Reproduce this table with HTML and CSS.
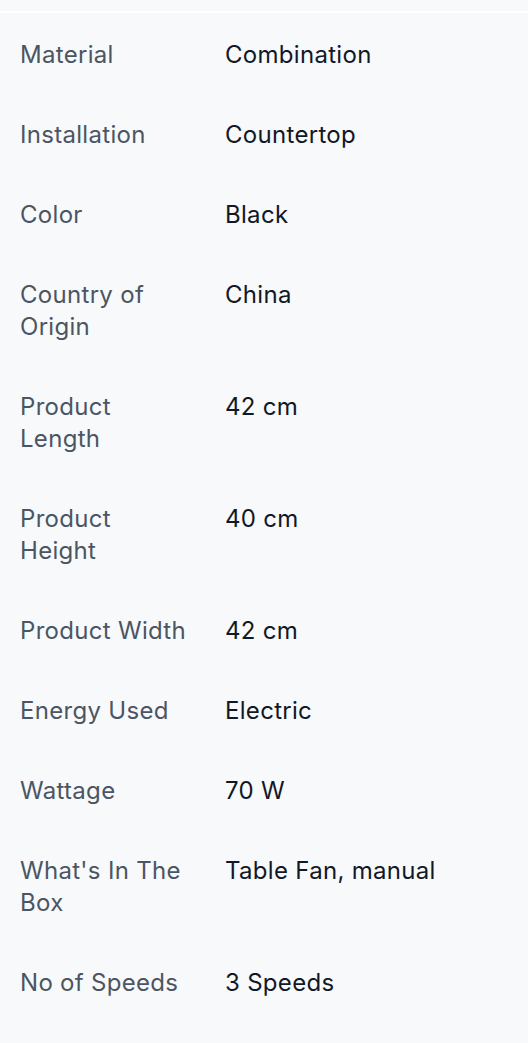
FILE: index.html
```html
<!DOCTYPE html>
<html lang="en">
<head>
    <meta charset="UTF-8">
    <meta name="viewport" content="width=device-width, initial-scale=1.0">
    <title>Specifications</title>
    <link rel="stylesheet" href="styles.css">
</head>
<body>
    <div class="top-strip"></div>
    <dl class="specs">
        <div class="spec-row"><dt>Material</dt><dd>Combination</dd></div>
        <div class="spec-row"><dt>Installation</dt><dd>Countertop</dd></div>
        <div class="spec-row"><dt>Color</dt><dd>Black</dd></div>
        <div class="spec-row"><dt>Country of Origin</dt><dd>China</dd></div>
        <div class="spec-row"><dt>Product Length</dt><dd>42 cm</dd></div>
        <div class="spec-row"><dt>Product Height</dt><dd>40 cm</dd></div>
        <div class="spec-row"><dt>Product Width</dt><dd>42 cm</dd></div>
        <div class="spec-row"><dt>Energy Used</dt><dd>Electric</dd></div>
        <div class="spec-row"><dt>Wattage</dt><dd>70 W</dd></div>
        <div class="spec-row"><dt>What's In The Box</dt><dd>Table Fan, manual</dd></div>
        <div class="spec-row"><dt>No of Speeds</dt><dd>3 Speeds</dd></div>
    </dl>
</body>
</html>
```

FILE: styles.css
```css
body {
    margin: 0;
    background: #f8f9fb;
    font-family: 'Inter', 'Liberation Sans', sans-serif;
}

.top-strip {
    height: 11px;
    border-bottom: 2px solid #ffffff;
}

.specs {
    margin: 0;
    padding-top: 2px;
}

.spec-row {
    display: grid;
    grid-template-columns: 172px 1fr;
    column-gap: 33px;
    padding: 24px 20px;
    font-size: 24px;
    line-height: 32px;
    letter-spacing: 0.3px;
}

.spec-row dt {
    color: #4b5563;
}

.spec-row dd {
    margin: 0;
    color: #111827;
}
```
